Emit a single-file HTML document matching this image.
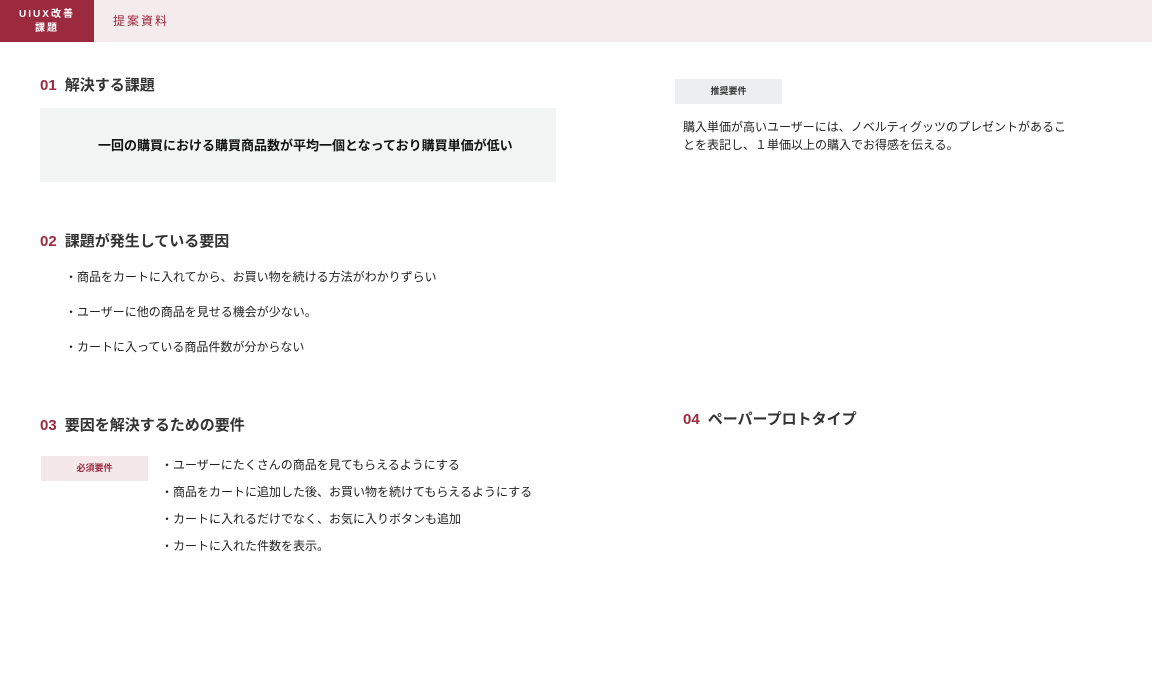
<!DOCTYPE html><html><head><meta charset="utf-8"><style>
*{margin:0;padding:0;box-sizing:border-box}
body{width:1152px;height:700px;background:#fff;font-family:"Liberation Sans","Noto Sans CJK JP",sans-serif;color:#222;position:relative;overflow:hidden}
.a{position:absolute;white-space:nowrap}
.hdr{position:absolute;left:0;top:0;width:1152px;height:42px;background:#f4ebec}
.logo{position:absolute;left:0;top:0;width:94px;height:42px;background:#9b2a3e;color:#fff;font-size:10px;line-height:14px;text-align:center;padding-top:8px;letter-spacing:2px;font-weight:bold}
.h{font-size:15px;font-weight:bold;color:#333}
.h b{color:#9b2a3e;margin-right:8px}
.t{font-size:12px;color:#222}
</style></head><body>
<div class="hdr"></div>
<div class="logo">UIUX改善<br>課題</div>
<div class="a" style="left:113px;top:12px;font-size:12px;color:#9b2a3e;letter-spacing:2px">提案資料</div>

<div class="a h" style="left:40px;top:74px"><b>01</b>解決する課題</div>
<div class="a" style="left:40px;top:108px;width:516px;height:74px;background:#f2f3f3"></div>
<div class="a" style="left:98px;top:135px;font-size:13px;font-weight:bold;color:#111">一回の購買における購買商品数が平均一個となっており購買単価が低い</div>

<div class="a h" style="left:40px;top:230px"><b>02</b>課題が発生している要因</div>
<div class="a t" style="left:65px;top:268px">・商品をカートに入れてから、お買い物を続ける方法がわかりずらい</div>
<div class="a t" style="left:65px;top:303px">・ユーザーに他の商品を見せる機会が少ない。</div>
<div class="a t" style="left:65px;top:338px">・カートに入っている商品件数が分からない</div>

<div class="a h" style="left:40px;top:414px"><b>03</b>要因を解決するための要件</div>
<div class="a" style="left:41px;top:456px;width:107px;height:25px;background:#f4e8ea;color:#9b2a3e;font-size:9px;font-weight:bold;text-align:center;line-height:25px">必須要件</div>
<div class="a t" style="left:161px;top:456px">・ユーザーにたくさんの商品を見てもらえるようにする</div>
<div class="a t" style="left:161px;top:483px">・商品をカートに追加した後、お買い物を続けてもらえるようにする</div>
<div class="a t" style="left:161px;top:510px">・カートに入れるだけでなく、お気に入りボタンも追加</div>
<div class="a t" style="left:161px;top:537px">・カートに入れた件数を表示。</div>

<div class="a" style="left:675px;top:79px;width:107px;height:25px;background:#eceeef;color:#333;font-size:9px;font-weight:bold;text-align:center;line-height:25px">推奨要件</div>
<div class="a t" style="left:683px;top:118px;line-height:18px">購入単価が高いユーザーには、ノベルティグッツのプレゼントがあるこ<br>とを表記し、１単価以上の購入でお得感を伝える。</div>

<div class="a h" style="left:683px;top:408px"><b>04</b>ペーパープロトタイプ</div>
</body></html>
